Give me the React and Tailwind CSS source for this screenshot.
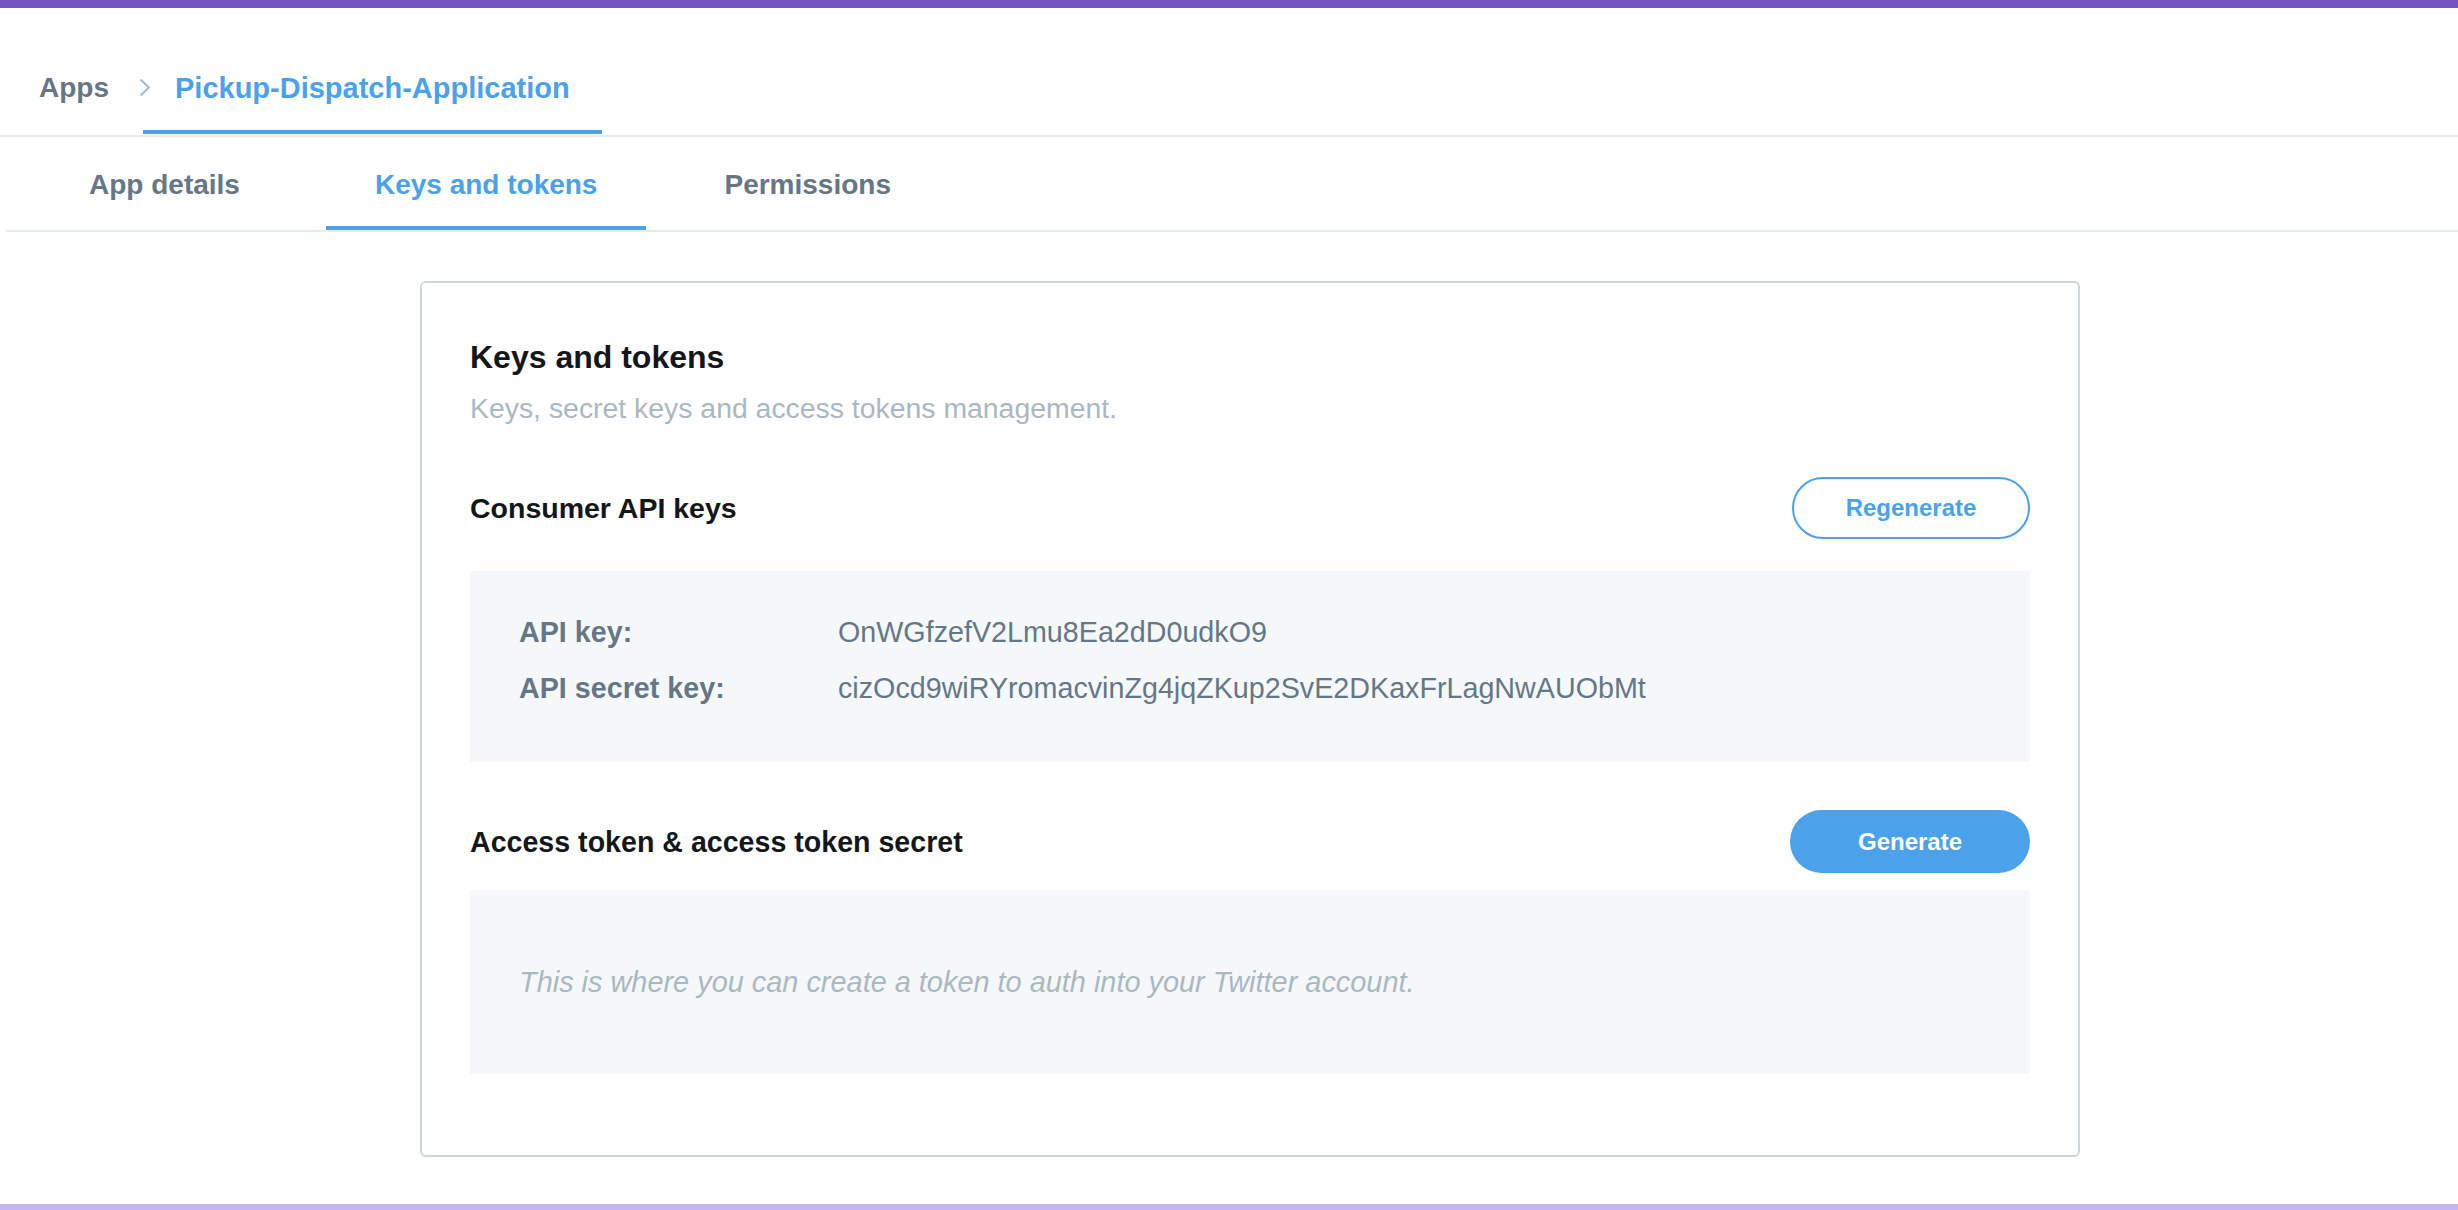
import React from "react";

const Chevron = () => (
  <svg
    className="absolute left-[-4px] top-[7px]"
    width="12"
    height="19"
    viewBox="0 0 12 19"
    fill="none"
  >
    <path d="M1.5 1.5 L10 9.5 L1.5 17.5" stroke="#AAB8C2" strokeWidth="2" />
  </svg>
);

export default function App() {
  return (
    <div className="min-h-screen flex flex-col bg-white font-['Liberation_Sans',Arial,sans-serif]">
      <div className="h-2 bg-[#7453C0]" />

      {/* breadcrumb */}
      <nav className="h-[129px] border-b-2 border-[#E6ECF0] flex items-end pl-[39px]">
        <span className="mb-[30px] text-[28px] leading-[34px] font-bold text-[#657786]">
          Apps
        </span>
        <div className="relative ml-[34px] mb-px px-8 pb-[25px] border-b-4 border-[#4BA2EB] text-[29px] leading-[34px] font-bold text-[#4BA2EB]">
          <Chevron />
          Pickup-Dispatch-Application
        </div>
      </nav>

      {/* tabs */}
      <div className="h-[95px] ml-[6px] border-b-2 border-[#E6ECF0] flex items-end">
        <div className="ml-[34px] px-[49px] pb-[24px] border-b-4 border-transparent text-[28px] leading-[34px] font-bold text-[#657786]">
          App details
        </div>
        <div className="ml-[37px] px-[49px] pb-[24px] border-b-4 border-[#4BA2EB] text-[28px] leading-[34px] font-bold text-[#4BA2EB]">
          Keys and tokens
        </div>
        <div className="ml-[29px] px-[49px] pb-[24px] border-b-4 border-transparent text-[28px] leading-[34px] font-bold text-[#657786]">
          Permissions
        </div>
      </div>

      <main className="flex-1">
        <div className="mt-[49px] ml-[420px] w-[1660px] border-2 border-[#CCD6DD] rounded-md px-12 pt-[54px] pb-[81px]">
          <h1 className="text-[32px] leading-[40px] font-bold text-[#14171A]">
            Keys and tokens
          </h1>
          <p className="mt-[14px] text-[28.4px] leading-[34px] text-[#AAB8C2]">
            Keys, secret keys and access tokens management.
          </p>

          <div className="mt-[52px] h-[62px] flex items-center justify-between">
            <h2 className="text-[28.5px] leading-[34px] font-bold text-[#14171A]">
              Consumer API keys
            </h2>
            <button className="w-[238px] h-[62px] rounded-full border-2 border-[#4BA2EB] bg-white text-[24px] font-bold text-[#4BA2EB]">
              Regenerate
            </button>
          </div>

          <div className="mt-[32px] bg-[#F5F8FA] pt-[33px] pb-[46px] pl-[49px]">
            <div className="grid grid-cols-[319px_1fr] text-[28.7px] leading-[56px] text-[#657786]">
              <span className="font-bold">API key:</span>
              <span>OnWGfzefV2Lmu8Ea2dD0udkO9</span>
              <span className="font-bold">API secret key:</span>
              <span>cizOcd9wiRYromacvinZg4jqZKup2SvE2DKaxFrLagNwAUObMt</span>
            </div>
          </div>

          <div className="mt-[48px] h-[63px] flex items-center justify-between">
            <h2 className="text-[28.6px] leading-[34px] font-bold text-[#14171A]">
              Access token &amp; access token secret
            </h2>
            <button className="w-[240px] h-[63px] rounded-full bg-[#4BA2EB] text-[24px] font-bold text-white">
              Generate
            </button>
          </div>

          <div className="mt-[17px] h-[184px] bg-[#F5F8FA] flex items-center pl-[49px]">
            <p className="text-[28.9px] leading-[34px] italic text-[#AAB8C2]">
              This is where you can create a token to auth into your Twitter account.
            </p>
          </div>
        </div>
      </main>

      <div className="h-[6px] bg-[#C3B6F3]" />
    </div>
  );
}
